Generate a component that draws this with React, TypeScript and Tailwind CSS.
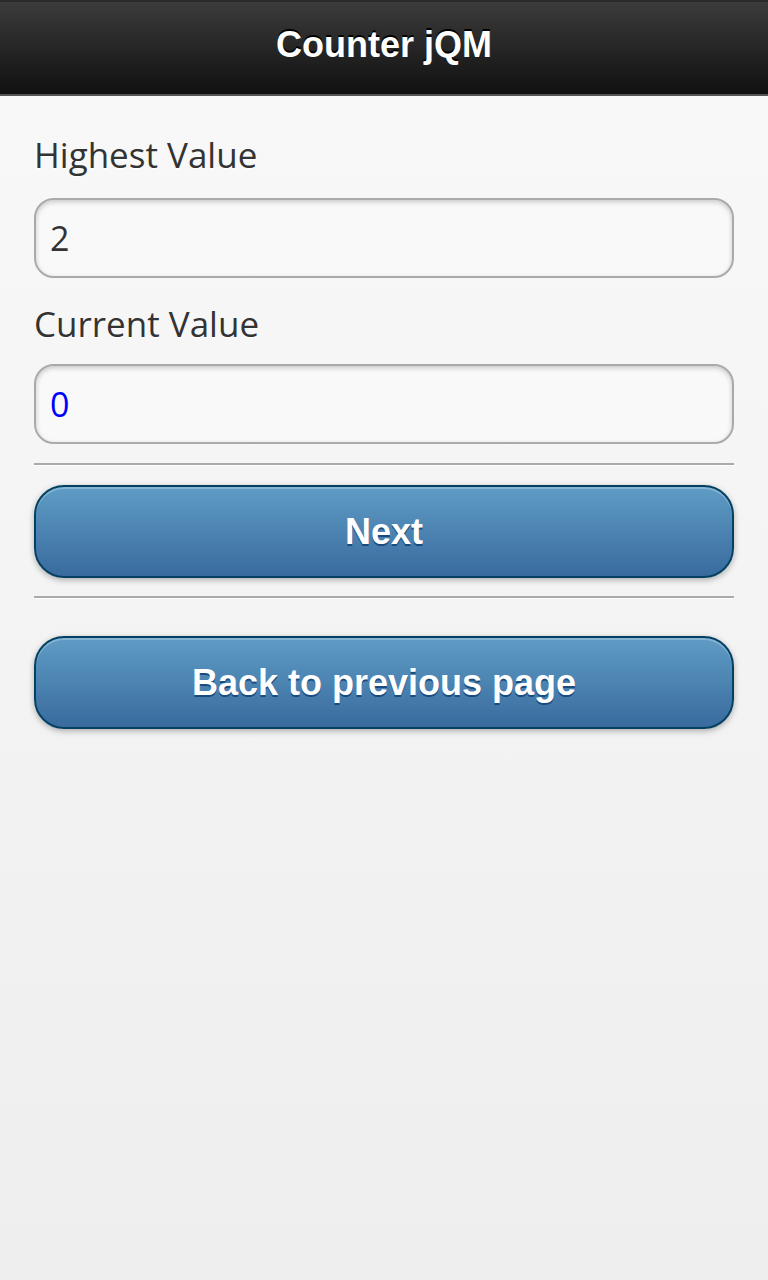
export default function App() {
  return (
    <div className="min-h-[1280px] flex flex-col bg-gradient-to-b from-[#f9f9f9] to-[#eeeeee]" style={{ fontFamily: "'Open Sans', 'Noto Sans', sans-serif" }}>
      {/* Header bar */}
      <header className="h-[96px] shrink-0 flex items-center justify-center pb-[6px] bg-gradient-to-b from-[#3c3c3c] to-[#111111] border-t-2 border-t-[#2a2a2a] border-b-2 border-b-[#555]">
        <h1
          className="text-white font-bold text-[36px] [text-shadow:0_-2px_0_#000]"
          style={{ fontFamily: "'Liberation Sans', Arial, sans-serif" }}
        >
          Counter jQM
        </h1>
      </header>

      <main className="flex flex-col px-[34px] pt-[35px]">
        <label className="text-[35px] leading-[48px] text-[#333] [text-shadow:0_1px_0_#fff] mb-[19px]">Highest Value</label>
        <div className="h-[80px] rounded-[20px] border-2 border-[#aaa] bg-[#f9f9f9] shadow-[inset_0_2px_5px_rgba(0,0,0,0.2)] flex items-center px-[14px] text-[34px] text-[#333]">
          2
        </div>

        <label className="text-[35px] leading-[48px] text-[#333] [text-shadow:0_1px_0_#fff] mt-[22px] mb-[16px]">Current Value</label>
        <div className="h-[80px] rounded-[20px] border-2 border-[#aaa] bg-[#f9f9f9] shadow-[inset_0_2px_5px_rgba(0,0,0,0.2)] flex items-center px-[14px] text-[34px] text-[#0000ff]">
          0
        </div>

        <div className="mt-[19px] h-[2px] bg-[#aaa] border-b border-b-[#fff] box-content" />

        <button
          className="mt-[19px] h-[93px] rounded-[30px] border-2 border-[#044062] bg-gradient-to-b from-[#5f9cc5] to-[#396b9e] shadow-[0_2px_6px_rgba(0,0,0,0.3),inset_0_2px_0_rgba(255,255,255,0.25)] text-white font-bold text-[36px] [text-shadow:0_2px_0_#194b7e]"
          style={{ fontFamily: "'Liberation Sans', Arial, sans-serif" }}
        >
          Next
        </button>

        <div className="mt-[18px] h-[2px] bg-[#aaa] border-b border-b-[#fff] box-content" />

        <button
          className="mt-[37px] h-[93px] rounded-[30px] border-2 border-[#044062] bg-gradient-to-b from-[#5f9cc5] to-[#396b9e] shadow-[0_2px_6px_rgba(0,0,0,0.3),inset_0_2px_0_rgba(255,255,255,0.25)] text-white font-bold text-[36px] [text-shadow:0_2px_0_#194b7e]"
          style={{ fontFamily: "'Liberation Sans', Arial, sans-serif" }}
        >
          Back to previous page
        </button>
      </main>
    </div>
  )
}
